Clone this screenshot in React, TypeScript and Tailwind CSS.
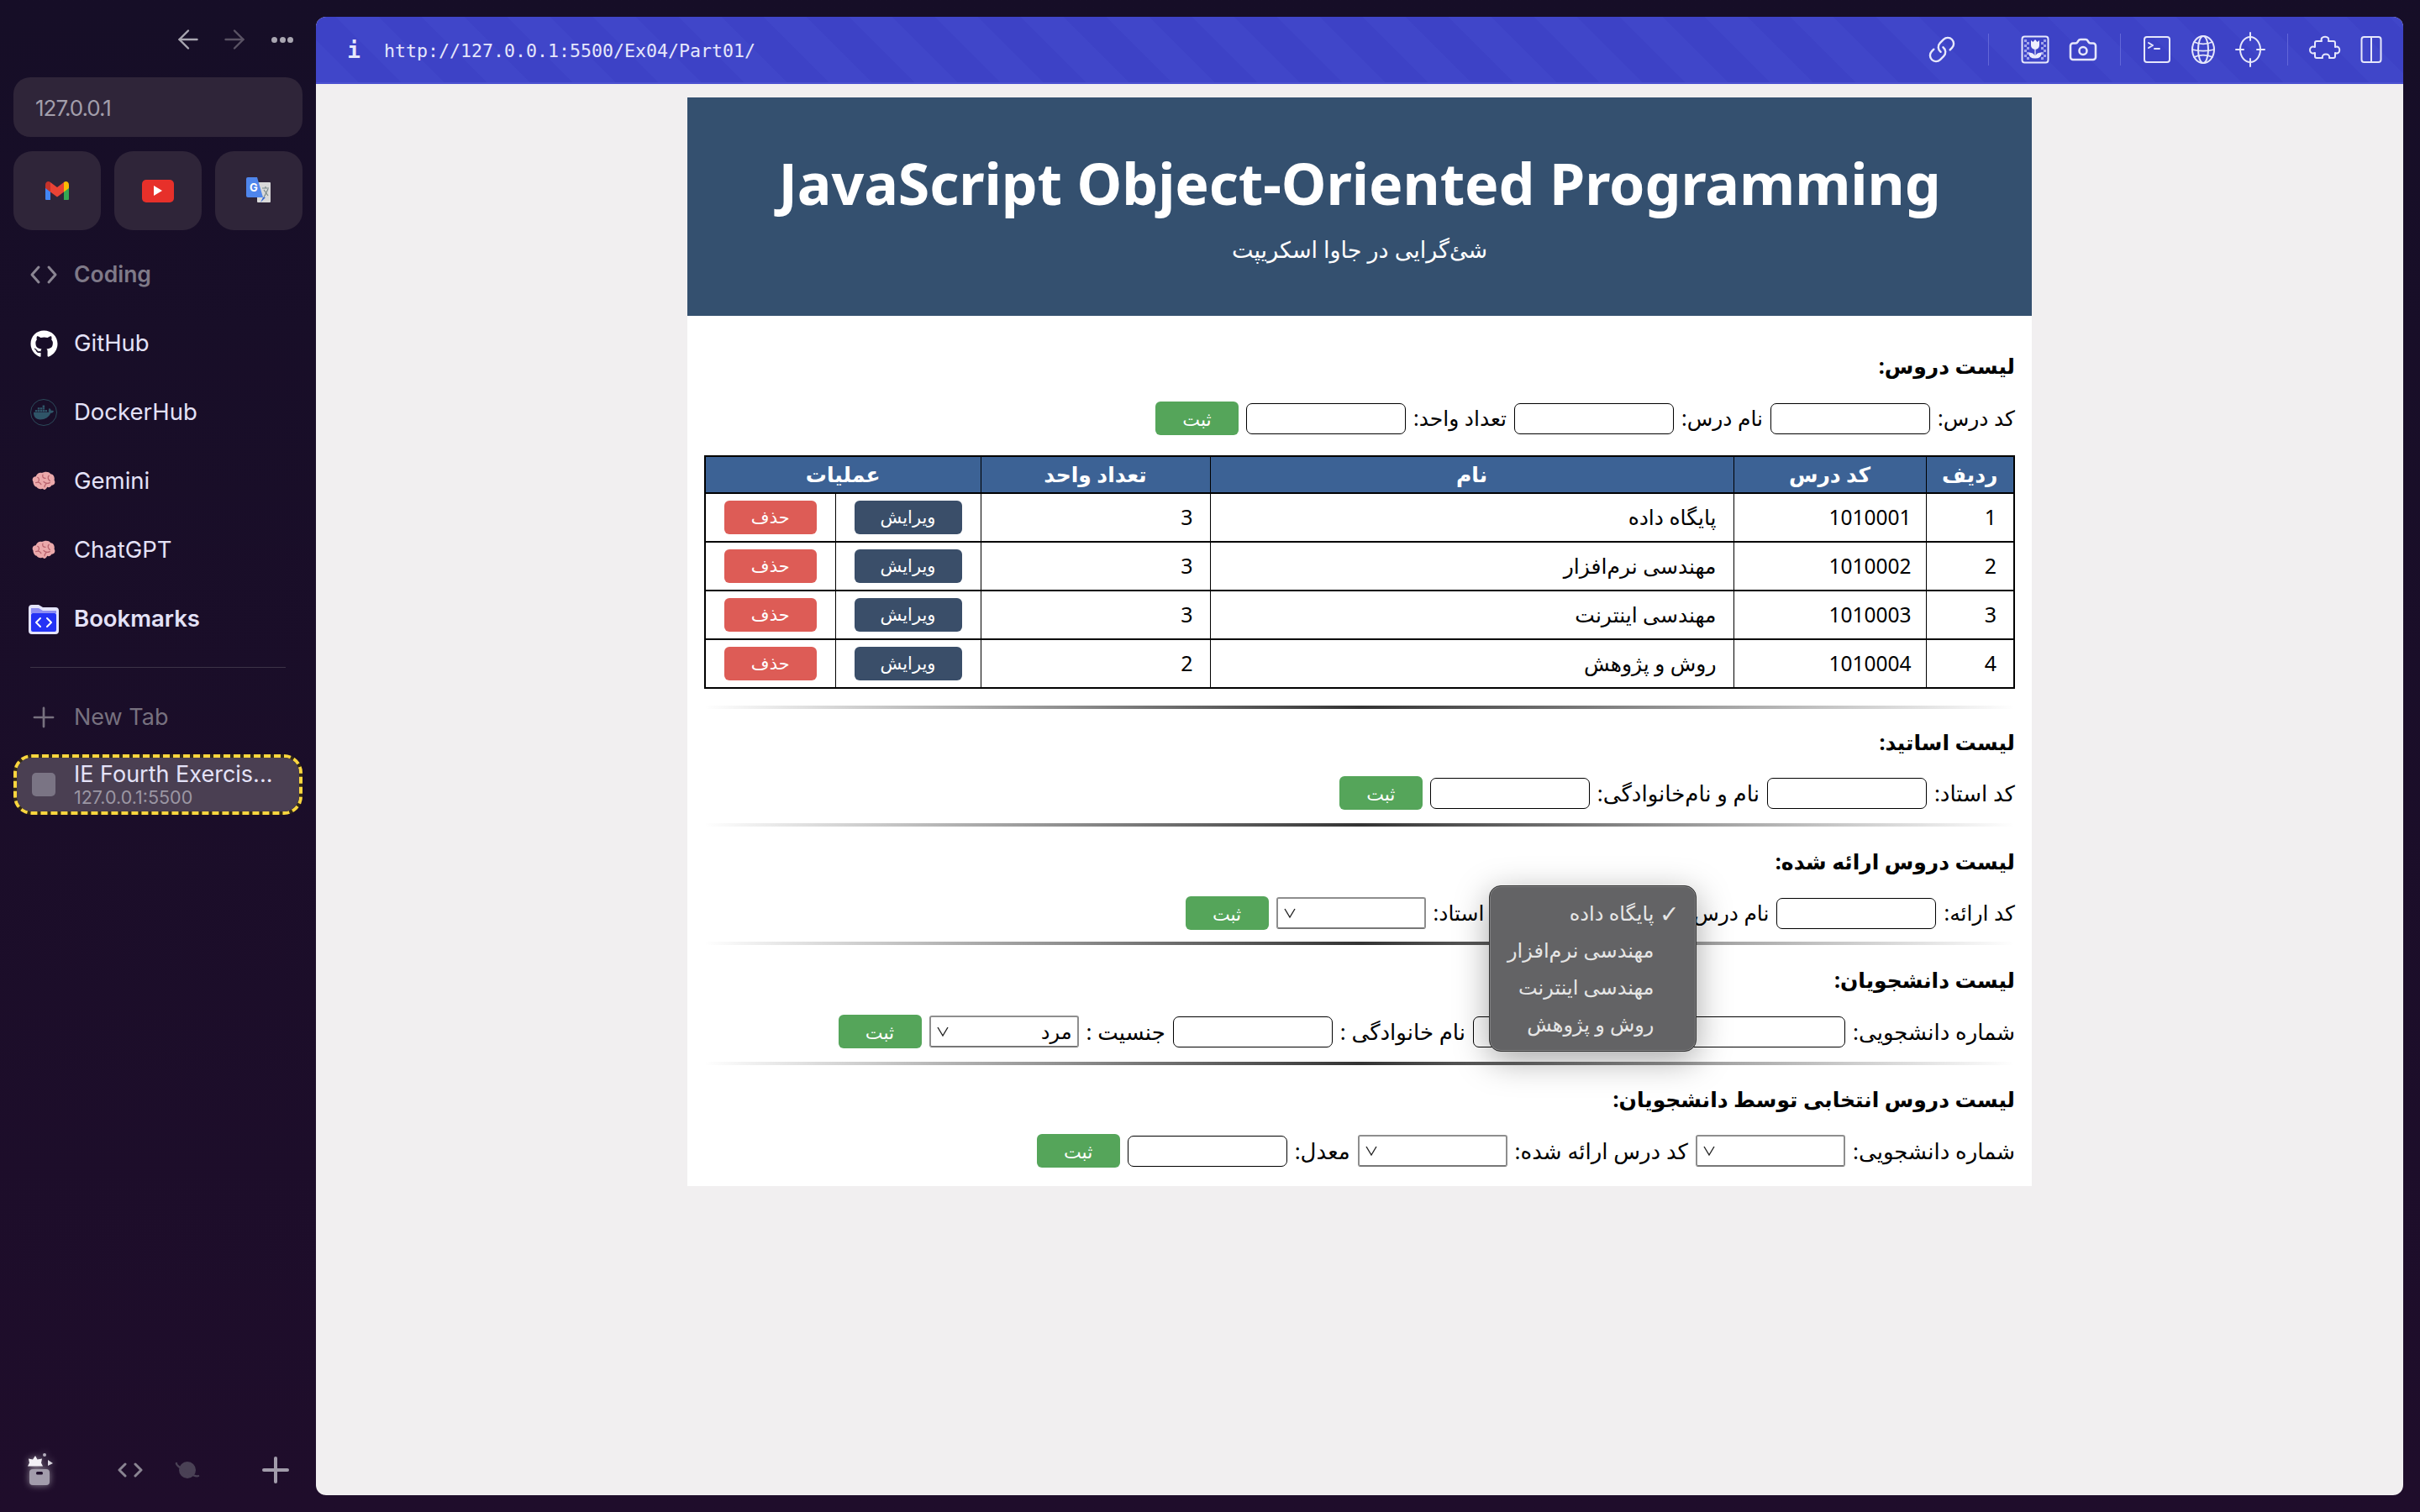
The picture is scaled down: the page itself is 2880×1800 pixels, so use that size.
import { FaDocker, FaGithub } from 'react-icons/fa';
import { Camera, Link, Plus, ArrowLeft, ArrowRight } from 'lucide-react';

const courses = [
  { id: 1, code: '1010001', name: 'پایگاه داده', units: 3 },
  { id: 2, code: '1010002', name: 'مهندسی نرم‌افزار', units: 3 },
  { id: 3, code: '1010003', name: 'مهندسی اینترنت', units: 3 },
  { id: 4, code: '1010004', name: 'روش و پژوهش', units: 2 },
];

function Brain() {
  return (
    <svg width="28" height="24" viewBox="1 0 26 23" fill="none">
      <path d="M2 12c-2-3 0-6 3-6 1-3 4-5 7-4 3-2 8-2 10 1 3 0 5 4 4 7 2 3 0 6-3 6-1 2-3 3-5 2-1 3-4 4-5 2-3 1-6 0-7-2-2 0-4-3-4-6z" fill="#eba9ab" />
      <path d="M7 7c2 1 2 3 1 5M13 4c-1 3 1 4 3 4M20 5c-2 2-1 4 1 6M5 13c3-1 5 0 6 2M14 12c2 2 5 2 7 1M15 18c0-2 1-3 2-4" stroke="#b8636e" strokeWidth="1.2" strokeLinecap="round" />
    </svg>
  );
}

function Folder() {
  return (
    <svg width="38" height="38" viewBox="0 0 38 38" fill="none">
      <path d="M1 6a4 4 0 0 1 4-4h8l5 3h15a4 4 0 0 1 4 4v24a4 4 0 0 1-4 4H5a4 4 0 0 1-4-4z" fill="#e4e4fb" />
      <path d="M4 6h9l5 3h16v3H4z" fill="#8d8df2" />
      <rect x="4" y="12" width="30" height="22" rx="2" fill="#2433f5" />
      <path d="M15 18l-5 5 5 5M23 18l5 5-5 5" stroke="#fff" strokeWidth="2" strokeLinecap="round" strokeLinejoin="round" />
    </svg>
  );
}

function Gmail() {
  return (
    <svg width="28" height="22" viewBox="0 0 28 22" fill="none">
      <path d="M0 6h6v16H1a1 1 0 0 1-1-1z" fill="#4285f4" />
      <path d="M28 6h-6v16h5a1 1 0 0 0 1-1z" fill="#34a853" />
      <path d="M6 1l8 6 8-6v11.500l-8 6-8-6z" fill="#ea4335" />
      <path d="M0 4c0-4 4-5 6-3v11.500L0 8z" fill="#c5322a" />
      <path d="M28 4c0-4-4-5-6-3v11.500L28 8z" fill="#fbbc04" />
    </svg>
  );
}

function Translate() {
  return (
    <svg width="32" height="32" viewBox="0 0 32 32">
      <rect x="14" y="6" width="16" height="24" rx="1" fill="#d9d9d9" />
      <path d="M1 2a2 2 0 0 1 2-2h11l7 24H3a2 2 0 0 1-2-2z" fill="#4f86ec" />
      <path d="M21 24l-3 6 6-6z" fill="#3367d6" />
      <text x="5" y="17" fontSize="13" fontWeight="700" fill="#fff" fontFamily="Inter">G</text>
      <path d="M20 13h8M24 11v2M22 24l5-10M22 15l5 7" stroke="#7b8a8b" strokeWidth="1.2" fill="none" />
    </svg>
  );
}

function TopBarIcons() {
  const stroke = { stroke: '#e6e7fb', strokeWidth: 2, fill: 'none', strokeLinecap: 'round', strokeLinejoin: 'round' } as const;
  return (
    <div className="ml-auto flex h-full items-center text-[#e6e7fb]">
      <Link size={34} strokeWidth={1.7} className="mr-[38px] -scale-x-100 rotate-90" />
      <div className="mr-[38px] h-[38px] w-px bg-[#6367d8]" />
      <svg width="34" height="34" viewBox="0 0 34 34" className="mr-[22px]">
        <rect x="1.500" y="1.500" width="31" height="31" rx="3" {...stroke} />
        <path d="M4 5h3v3H4zM7 8h3v3H7zM4 11h3v3H4zM7 14h3v3H7zM4 17h3v3H4zM7 20h3v3H7zM4 23h3v3H4zM7 26h3v3H7zM27 5h3v3h-3zM24 8h3v3h-3zM27 11h3v3h-3zM24 14h3v3h-3zM27 17h3v3h-3zM24 20h3v3h-3zM27 23h3v3h-3zM24 26h3v3h-3z" fill="#a3a6ea" />
        <path d="M12 6l2.500 2 2.500-3 2.500 3 2.500-2v6a5 5 0 0 1-10 0z" fill="#eeeefd" />
        <path d="M17 17v10M17 27c-4 0-7-2-7-6 4 0 6 2 7 6zM17 27c4 0 7-2 7-6-4 0-6 2-7 6z" fill="#eeeefd" stroke="#eeeefd" strokeWidth="1.200" />
      </svg>
      <Camera size={36} strokeWidth={1.7} className="mr-[26px]" />
      <div className="mr-[26px] h-[38px] w-px bg-[#6367d8]" />
      <svg width="34" height="34" viewBox="0 0 34 34" className="mr-[22px]">
        <rect x="2" y="2" width="30" height="30" rx="3" {...stroke} />
        <path d="M7 9l5 3-5 3M14 16h6" {...stroke} />
      </svg>
      <svg width="32" height="36" viewBox="0 0 32 36" className="mr-[22px]">
        <ellipse cx="16" cy="18" rx="13" ry="16" {...stroke} />
        <ellipse cx="16" cy="18" rx="6" ry="16" {...stroke} />
        <path d="M5 9c7 3 15 3 22 0M3 18c8 2 18 2 26 0M5 27c7-3 15-3 22 0" {...stroke} strokeWidth={1.6} />
      </svg>
      <svg width="36" height="44" viewBox="0 0 36 44" className="mr-[26px]">
        <ellipse cx="18" cy="22" rx="12" ry="15" {...stroke} />
        <path d="M18 2v9M18 33v9M1 22h9M26 22h9" {...stroke} />
      </svg>
      <div className="mr-[24px] h-[38px] w-px bg-[#6367d8]" />
      <svg width="40" height="34" viewBox="0 0 40 34" className="mr-[22px]">
        <path d="M10 7h6c-3-7 11-7 8 0h6a2 2 0 0 1 2 2v5c7-3 7 10 0 7v4a2 2 0 0 1-2 2h-5c2-6-10-6-8 0h-7a2 2 0 0 1-2-2v-4c-8 3-8-10 0-7V9a2 2 0 0 1 2-2z" {...stroke} />
      </svg>
      <svg width="26" height="34" viewBox="0 0 26 34" className="mr-[25px]">
        <rect x="1.500" y="2" width="23" height="30" rx="3" {...stroke} />
        <path d="M13 2v30" {...stroke} />
      </svg>
    </div>
  );
}

function Sidebar() {
  const item = 'flex h-[82px] shrink-0 items-center text-[27.500px] text-[#e4e2f8]';
  const iconBox = 'flex w-[72px] shrink-0 justify-center';
  return (
    <aside className="flex h-full w-[376px] shrink-0 flex-col px-4 [font-family:Inter,sans-serif]">
      <div className="flex h-[92px] items-center justify-end pr-[11px] pt-[2px]">
        <ArrowLeft size={36} strokeWidth={1.6} className="mr-[19px] text-[#a9a6b1]" />
        <ArrowRight size={36} strokeWidth={1.6} className="mr-[26px] text-[#5a5364]" />
        <div className="flex w-[26px] justify-between">
          <div className="h-[7px] w-[7px] rounded-full bg-[#a9a6b1]" />
          <div className="h-[7px] w-[7px] rounded-full bg-[#a9a6b1]" />
          <div className="h-[7px] w-[7px] rounded-full bg-[#a9a6b1]" />
        </div>
      </div>
      <div className="flex h-[71px] shrink-0 items-center rounded-[20px] bg-[#2f2539] pl-[26px] pt-[2px] text-[26px] tracking-[-1px] text-[#a29eab]">127.0.0.1</div>
      <div className="mt-[17px] grid h-[94px] shrink-0 grid-cols-3 gap-4">
        <div className="flex items-center justify-center rounded-[22px] bg-[#2f2539]"><Gmail /></div>
        <div className="flex items-center justify-center rounded-[22px] bg-[#2f2539]">
          <div className="flex h-[27px] w-[38px] items-center justify-center rounded-[5px] bg-[#e7302a]">
            <div className="h-0 w-0 border-y-[6px] border-l-[10px] border-y-transparent border-l-white" />
          </div>
        </div>
        <div className="flex items-center justify-center rounded-[22px] bg-[#2f2539]"><Translate /></div>
      </div>
      <div className="mt-[12px] flex h-[82px] shrink-0 items-center text-[26.500px] font-semibold text-[#7f7a88]">
        <div className={iconBox}>
          <svg width="34" height="24" viewBox="0 0 34 24" fill="none" stroke="#8a8592" strokeWidth="3" strokeLinecap="round" strokeLinejoin="round"><path d="M11 3l-8 9 8 9M23 3l8 9-8 9" /></svg>
        </div>
        Coding
      </div>
      <div className={item}><div className={iconBox}><FaGithub size={33} color="#fff" /></div>GitHub</div>
      <div className={item}>
        <div className={iconBox}>
          <div className="flex h-[32px] w-[32px] items-center justify-center rounded-full border border-[#2b4a5a]"><FaDocker size={24} color="#2f5568" /></div>
        </div>
        DockerHub
      </div>
      <div className={item}><div className={iconBox}><Brain /></div>Gemini</div>
      <div className={item}><div className={iconBox}><Brain /></div>ChatGPT</div>
      <div className={`${item} font-semibold`}><div className={iconBox}><Folder /></div>Bookmarks</div>
      <div className="mx-5 mt-[16px] h-px shrink-0 bg-[#3c3346]" />
      <div className="mt-[18px] flex h-[82px] shrink-0 items-center text-[27px] text-[#77717f]">
        <div className={iconBox}><Plus size={38} strokeWidth={1.7} color="#77717f" /></div>
        New Tab
      </div>
      <div className="mt-[3px] flex h-[72px] shrink-0 rounded-[22px] border-[4px] border-dashed border-[#fbd63f] bg-[#332a14]">
        <div className="flex w-full items-center rounded-[18px] bg-[#4a3f52]">
          <div className="ml-[18px] h-[28px] w-[28px] shrink-0 rounded-[5px] bg-[#7a7484]" />
          <div className="ml-[22px] min-w-0">
            <div className="text-[27px] leading-[31px] text-[#e4e2f8]">IE Fourth Exercis...</div>
            <div className="text-[21.500px] leading-[25px] text-[#9b96a3]">127.0.0.1:5500</div>
          </div>
        </div>
      </div>
      <div className="mt-auto flex h-[80px] items-center pb-[20px]">
        <div className="ml-[16px] flex w-[64px] justify-start">
          <svg width="36" height="42" viewBox="0 0 36 42" className="drop-shadow-[0_0_4px_rgba(255,255,255,0.5)]">
            <path d="M10 4l2.500 4.500 5.500-1-1 5 2 4H1l2-4-1-5 5 1z" fill="#f3f0f6" />
            <circle cx="21" cy="3" r="2" fill="#b5afbd" />
            <path d="M25 9l6 4-6 3z" fill="#d8d4de" />
            <rect x="3" y="20" width="24" height="19" rx="4" fill="#a29cab" />
            <rect x="11" y="23" width="8" height="3.500" rx="1.500" fill="#1f0e2b" />
          </svg>
        </div>
        <svg width="30" height="18" viewBox="0 0 30 18" className="ml-[44px]" fill="none" stroke="#8a8592" strokeWidth="3" strokeLinecap="round" strokeLinejoin="round">
          <path d="M9 2l-7 7 7 7M21 2l7 7-7 7" />
        </svg>
        <svg width="30" height="24" viewBox="0 0 30 24" className="ml-[38px]" fill="none">
          <circle cx="15" cy="12" r="10" fill="#4a4155" />
          <path d="M2 4c-2 3 23 18 26 15" stroke="#4a4155" strokeWidth="2.400" strokeLinecap="round" />
        </svg>
        <Plus size={48} strokeWidth={2} className="ml-auto mr-[8px] text-[#a29cab]" />
      </div>
    </aside>
  );
}

function Field({ label }: { label: string }) {
  return (
    <>
      <label className="whitespace-nowrap">{label}</label>
      <div className="h-[37px] w-[190px] shrink-0 rounded-[7px] border border-black bg-white" />
    </>
  );
}

function Select({ label, value, menu }: { label: string; value?: string; menu?: boolean }) {
  return (
    <>
      <label className="whitespace-nowrap">{label}</label>
      <div className="relative shrink-0">
        <div className={`flex h-[38px] ${menu ? 'w-[224px]' : 'w-[178px]'} items-center justify-between rounded-[3px] border-2 border-[#8e8e8e] border-b-[#777] bg-white px-[6px]`}>
          <span className="text-[24px] leading-none">{value}</span>
          <svg width="16" height="16" viewBox="0 0 16 16" fill="none" stroke="#222" strokeWidth="1.400"><path d="M2 3l6 10 6-10" /></svg>
        </div>
        {menu && <SelectMenu />}
      </div>
    </>
  );
}

function SelectMenu() {
  const options = ['پایگاه داده', 'مهندسی نرم‌افزار', 'مهندسی اینترنت', 'روش و پژوهش'];
  return (
    <div className="absolute right-[-20px] top-[-14px] z-10 flex h-[198px] w-[247px] flex-col justify-center rounded-[14px] border border-[#333] bg-[#636365] pr-[50px] text-[24px] text-[#e6e6e6] shadow-[0_10px_40px_rgba(0,0,0,0.35),inset_0_0_0_1px_#808082]">
      <span className="absolute right-[20px] top-[20px] text-[28px] font-bold leading-[28px] [font-family:'DejaVu_Sans',sans-serif]">✓</span>
      {options.map((o) => (
        <div key={o} className="h-[44px] whitespace-nowrap leading-[44px]">{o}</div>
      ))}
    </div>
  );
}

function Submit() {
  return <button className="flex h-[40px] w-[99px] shrink-0 items-center justify-center rounded-[6px] bg-[#55a55a] text-[22px] text-white">ثبت</button>;
}

function Divider({ className }: { className: string }) {
  return <div className={`${className} h-[4px] bg-linear-to-r from-transparent via-[#333] to-transparent`} />;
}

function SectionTitle({ text, className }: { text: string; className: string }) {
  return <h2 className={`${className} h-[36px] text-[25px] font-bold leading-[36px]`}>{text}</h2>;
}

function CourseTable() {
  const cell = 'border-x border-b-2 border-black';
  return (
    <table className="mt-[24px] w-[1558px] table-fixed border-collapse border-2 border-black text-[25px]">
      <colgroup>
        <col className="w-[105px]" />
        <col className="w-[229px]" />
        <col className="w-[623px]" />
        <col className="w-[273px]" />
        <col className="w-[173px]" />
        <col className="w-[155px]" />
      </colgroup>
      <thead>
        <tr className="h-[44px] bg-[#3c6295] text-white">
          <th className={`${cell} font-bold`}>ردیف</th>
          <th className={`${cell} font-bold`}>کد درس</th>
          <th className={`${cell} font-bold`}>نام</th>
          <th className={`${cell} font-bold`}>تعداد واحد</th>
          <th colSpan={2} className={`${cell} font-bold`}>عملیات</th>
        </tr>
      </thead>
      <tbody>
        {courses.map((c) => (
          <tr key={c.id} className="h-[58px]">
            <td className={`${cell} pr-[20px]`}>{c.id}</td>
            <td className={`${cell} pr-[17px] text-[24.500px]`}>{c.code}</td>
            <td className={`${cell} pr-[20px]`}>{c.name}</td>
            <td className={`${cell} pr-[20px]`}>{c.units}</td>
            <td className={cell}>
              <button className="mx-auto flex h-[40px] w-[128px] items-center justify-center rounded-[6px] bg-[#3a4e69] text-[21px] text-white">ویرایش</button>
            </td>
            <td className={cell}>
              <button className="mx-auto flex h-[40px] w-[110px] items-center justify-center rounded-[6px] bg-[#dd5c56] text-[21px] text-white">حذف</button>
            </td>
          </tr>
        ))}
      </tbody>
    </table>
  );
}

function Page() {
  const row = 'flex h-[40px] items-center gap-[9px] whitespace-nowrap text-[26px]';
  return (
    <div dir="rtl" className="mx-auto mt-4 w-[1600px] bg-white text-black [font-family:'Noto_Sans','DejaVu_Sans',sans-serif]">
      <header className="flex h-[260px] flex-col items-center bg-[#34506f] text-white">
        <h1 dir="ltr" className="mt-[60px] text-[68px] font-bold leading-[84px] tracking-[-0.1px]">JavaScript Object-Oriented Programming</h1>
        <p className="mt-[17px] text-[27px] leading-[40px]">شئ‌گرایی در جاوا اسکریپت</p>
      </header>
      <div className="px-5 pb-[22px]">
        <SectionTitle className="mt-[41px]" text="لیست دروس:" />
        <div className="mt-[25px] flex h-[40px] items-center gap-[9px] whitespace-nowrap text-[25px]">
          <Field label="کد درس:" />
          <Field label="نام درس:" />
          <Field label="تعداد واحد:" />
          <Submit />
        </div>
        <CourseTable />
        <Divider className="mt-[20px]" />

        <SectionTitle className="mt-[21px]" text="لیست اساتید:" />
        <div className={`mt-[23px] ${row}`}>
          <Field label="کد استاد:" />
          <Field label="نام و نام‌خانوادگی:" />
          <Submit />
        </div>
        <Divider className="mt-[16px]" />

        <SectionTitle className="mt-[23px]" text="لیست دروس ارائه شده:" />
        <div className="mt-[24px] flex h-[40px] items-center gap-[9px] whitespace-nowrap text-[25px]">
          <Field label="کد ارائه:" />
          <Select label="نام درس:" menu />
          <Select label="استاد:" />
          <Submit />
        </div>
        <Divider className="mt-[14px]" />

        <SectionTitle className="mt-[23px]" text="لیست دانشجویان:" />
        <div className={`mt-[24px] ${row}`}>
          <Field label="شماره دانشجویی:" />
          <Field label="نام :" />
          <Field label="نام خانوادگی :" />
          <Select label="جنسیت :" value="مرد" />
          <Submit />
        </div>
        <Divider className="mt-[16px]" />

        <SectionTitle className="mt-[22px]" text="لیست دروس انتخابی توسط دانشجویان:" />
        <div className={`mt-[24px] ${row}`}>
          <Select label="شماره دانشجویی:" />
          <Select label="کد درس ارائه شده:" />
          <Field label="معدل:" />
          <Submit />
        </div>
      </div>
    </div>
  );
}

export default function App() {
  return (
    <div className="flex h-[1800px] w-[2880px] overflow-hidden bg-linear-to-b from-[#160e27] to-[#1f0d2b]">
      <Sidebar />
      <div className="flex min-w-0 flex-1 flex-col py-5 pr-5">
        <div className="flex h-full flex-col overflow-hidden rounded-[12px] bg-[#f1eff0]">
          <div className="flex h-[80px] shrink-0 items-center border-b-2 border-[#4c52d0] bg-[repeating-linear-gradient(45deg,#4046c9_0px,#4046c9_36px,#3d42c6_36px,#3d42c6_72px)] text-[#e6e7fb]">
            <span className="ml-[36px] mt-[3px] w-[18px] text-center text-[26px] font-bold [font-family:'DejaVu_Sans_Mono',monospace]">i</span>
            <span className="ml-[27px] mt-[4px] text-[21.600px] [font-family:'DejaVu_Sans_Mono',monospace]">http://127.0.0.1:5500/Ex04/Part01/</span>
            <TopBarIcons />
          </div>
          <div className="min-h-0 flex-1 overflow-hidden">
            <Page />
          </div>
        </div>
      </div>
    </div>
  );
}
